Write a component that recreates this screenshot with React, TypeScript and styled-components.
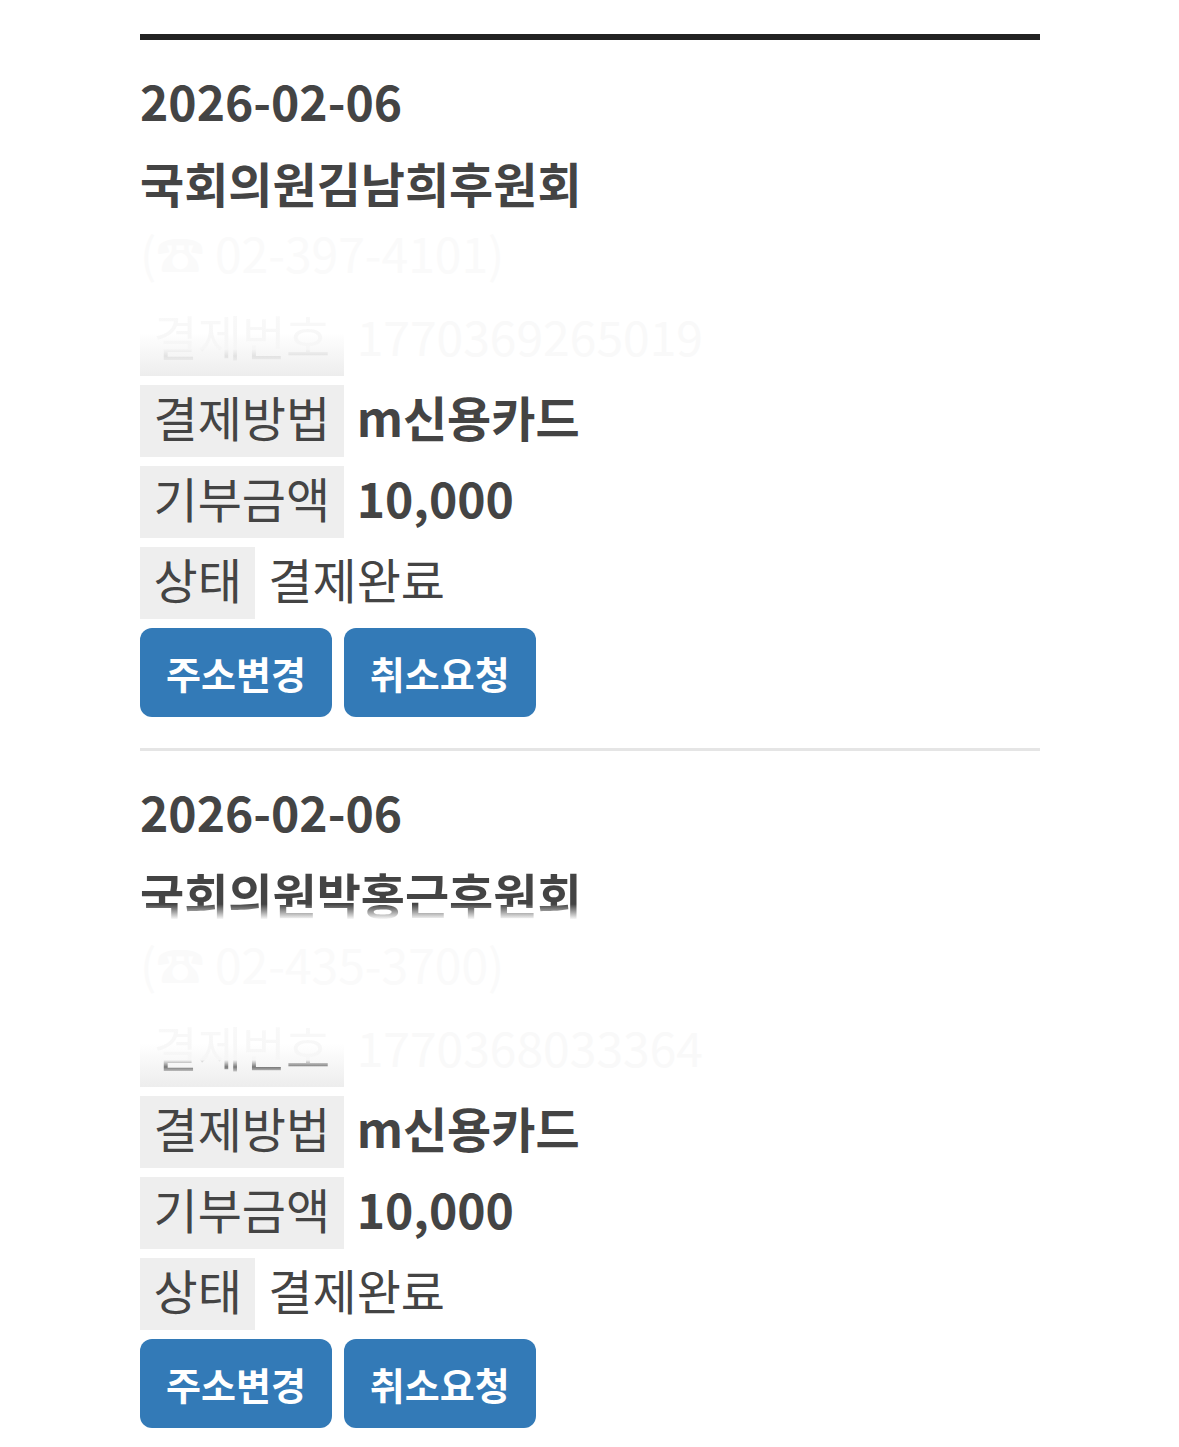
import React from "react";
import styled, { createGlobalStyle } from "styled-components";

const Global = createGlobalStyle`
  html, body { margin: 0; padding: 0; background: #fff; }
  body { font-family: "Noto Sans CJK KR", "Noto Sans", sans-serif; color: #444; }
`;

const List = styled.div`
  width: 900px;
  margin: 34px 0 0 140px;
  border-top: 6px solid #222;
`;

const Item = styled.section`
  padding: 25px 0 31px;
  border-bottom: 3px solid #e5e5e5;
`;

const DateLine = styled.div`
  font-size: 48px;
  font-weight: 700;
  line-height: 70px;
`;

const Name = styled.div<{ $faded?: boolean }>`
  margin-top: 12px;
  font-size: 48px;
  font-weight: 700;
  line-height: 70px;
  ${(p) =>
    p.$faded
      ? `
    background: linear-gradient(to bottom, #444 0%, #444 66%, #fff 88%);
    -webkit-background-clip: text;
    background-clip: text;
    color: transparent;
    width: max-content;
  `
      : ""}
`;

const Phone = styled.div`
  font-size: 48px;
  line-height: 70px;
  color: #fafafa;
`;

const Rows = styled.div`
  margin-top: 17px;
  display: flex;
  flex-direction: column;
  gap: 9px;
  margin-bottom: 9px;
`;

const Row = styled.div`
  display: flex;
  align-items: flex-start;
  height: 72px;
`;

const Label = styled.span`
  display: inline-block;
  height: 62px;
  line-height: 62px;
  padding: 0 13.5px 10px;
  font-size: 48px;
  font-weight: 400;
  background: #eee;
  color: #444;
`;

const FadedLabel = styled(Label)<{ $strength: string }>`
  background: linear-gradient(to bottom, #fff 0%, #fff 40%, #ededed 100%);
  & > span {
    background: linear-gradient(
      to bottom,
      #fafafa 0%,
      #f6f6f6 70%,
      ${(p) => p.$strength} 80%,
      #eee 90%
    );
    -webkit-background-clip: text;
    background-clip: text;
    color: transparent;
  }
`;

const Value = styled.span<{ $bold?: boolean; $faded?: boolean }>`
  margin-left: 13px;
  font-size: 48px;
  line-height: 62px;
  font-weight: ${(p) => (p.$bold ? 700 : 400)};
  color: ${(p) => (p.$faded ? "#f9f9f9" : "#444")};
`;

const Buttons = styled.div`
  display: flex;
  gap: 12px;
`;

const Button = styled.button`
  height: 89px;
  padding: 0 26px;
  border: 0;
  border-radius: 12px;
  background: #337ab7;
  color: #fff;
  font-family: "Noto Sans CJK KR", "Noto Sans", sans-serif;
  font-size: 38px;
  font-weight: 700;
  cursor: pointer;
`;

type Donation = {
  date: string;
  name: string;
  phone: string;
  serial: string;
  method: string;
  amount: string;
  status: string;
  fadedName?: boolean;
  stroke: string;
};

const data: Donation[] = [
  {
    date: "2026-02-06",
    name: "국회의원김남희후원회",
    phone: "(☎ 02-397-4101)",
    serial: "1770369265019",
    method: "m신용카드",
    amount: "10,000",
    status: "결제완료",
    stroke: "#e2e2e2",
  },
  {
    date: "2026-02-06",
    name: "국회의원박홍근후원회",
    phone: "(☎ 02-435-3700)",
    serial: "1770368033364",
    method: "m신용카드",
    amount: "10,000",
    status: "결제완료",
    fadedName: true,
    stroke: "#777",
  },
];

export default function App() {
  return (
    <>
      <Global />
      <List>
        {data.map((d, i) => (
          <Item key={i}>
            <DateLine>{d.date}</DateLine>
            <Name $faded={d.fadedName}>{d.name}</Name>
            <Phone>{d.phone}</Phone>
            <Rows>
              <Row>
                <FadedLabel $strength={d.stroke}>
                  <span>결제번호</span>
                </FadedLabel>
                <Value $faded>{d.serial}</Value>
              </Row>
              <Row>
                <Label>결제방법</Label>
                <Value $bold>{d.method}</Value>
              </Row>
              <Row>
                <Label>기부금액</Label>
                <Value $bold>{d.amount}</Value>
              </Row>
              <Row>
                <Label>상태</Label>
                <Value>{d.status}</Value>
              </Row>
            </Rows>
            <Buttons>
              <Button>주소변경</Button>
              <Button>취소요청</Button>
            </Buttons>
          </Item>
        ))}
      </List>
    </>
  );
}
